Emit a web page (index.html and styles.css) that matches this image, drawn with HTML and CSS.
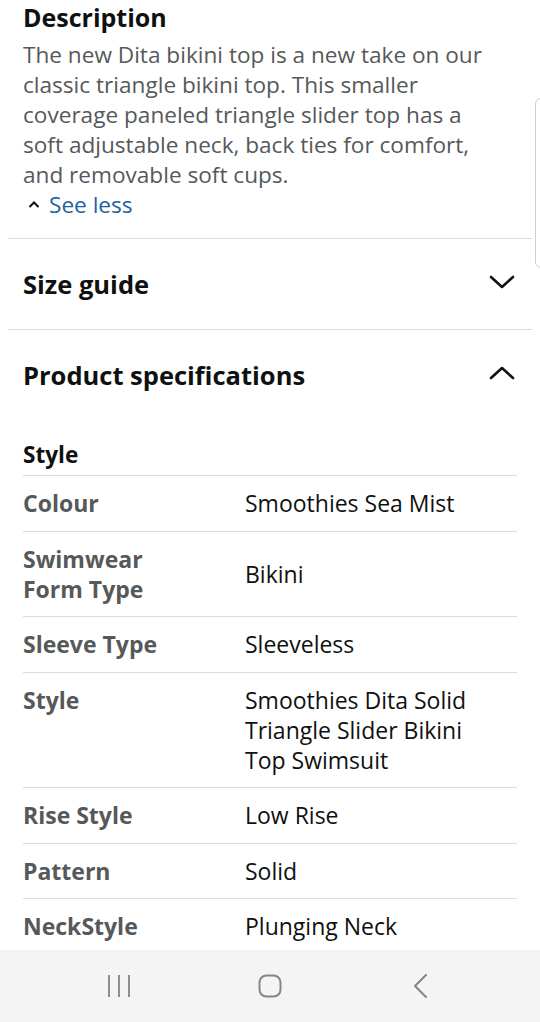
FILE: index.html
```html
<!DOCTYPE html>
<html lang="en">
<head>
<meta charset="utf-8">
<title>Product details</title>
<link rel="stylesheet" href="styles.css">
</head>
<body>
<main class="page">
  <section class="desc">
    <h2 class="desc-title">Description</h2>
    <p class="desc-text">The new Dita bikini top is a new take on our classic triangle bikini top. This smaller coverage paneled triangle slider top has a soft adjustable neck, back ties for comfort, and removable soft cups.</p>
    <a class="see-less" href="#">
      <svg class="caret" viewBox="0 0 12 8" width="12" height="8"><path d="M1.5 7 L6 2.5 L10.5 7" fill="none" stroke="#0f1111" stroke-width="2"/></svg>
      <span>See less</span>
    </a>
  </section>

  <section class="acc">
    <div class="acc-head">
      <h2 class="acc-title">Size guide</h2>
      <svg class="chev" viewBox="0 0 26 16" width="26" height="16"><path d="M2 3 L13 13 L24 3" fill="none" stroke="#0f1111" stroke-width="2.6" stroke-linecap="round" stroke-linejoin="round"/></svg>
    </div>
  </section>

  <section class="acc specs">
    <div class="acc-head">
      <h2 class="acc-title">Product specifications</h2>
      <svg class="chev" viewBox="0 0 26 16" width="26" height="16"><path d="M2 13 L13 3 L24 13" fill="none" stroke="#0f1111" stroke-width="2.6" stroke-linecap="round" stroke-linejoin="round"/></svg>
    </div>
    <h3 class="group">Style</h3>
    <div class="spec-table">
      <div class="row"><div class="k">Colour</div><div class="v">Smoothies Sea Mist</div></div>
      <div class="row"><div class="k">Swimwear Form Type</div><div class="v mid">Bikini</div></div>
      <div class="row"><div class="k">Sleeve Type</div><div class="v">Sleeveless</div></div>
      <div class="row"><div class="k">Style</div><div class="v">Smoothies Dita Solid Triangle Slider Bikini Top Swimsuit</div></div>
      <div class="row"><div class="k">Rise Style</div><div class="v">Low Rise</div></div>
      <div class="row"><div class="k">Pattern</div><div class="v">Solid</div></div>
      <div class="row"><div class="k">NeckStyle</div><div class="v">Plunging Neck</div></div>
    </div>
  </section>

  <div class="scroll-thumb"></div>
</main>

<nav class="navbar">
  <svg class="nav-ic" viewBox="0 0 24 24" width="24" height="24"><path d="M2 1 V23 M12 1 V23 M22 1 V23" stroke="#858585" stroke-width="1.8" fill="none"/></svg>
  <svg class="nav-ic" viewBox="0 0 24 24" width="24" height="24"><rect x="1.5" y="1.5" width="21" height="21" rx="7" ry="7" stroke="#858585" stroke-width="2" fill="none"/></svg>
  <svg class="nav-ic" viewBox="0 0 24 24" width="24" height="24"><path d="M17 1 L6 12 L17 23" stroke="#858585" stroke-width="2" fill="none" stroke-linecap="round" stroke-linejoin="round"/></svg>
</nav>
</body>
</html>
```

FILE: styles.css
```css
* { box-sizing: border-box; }
html, body { margin: 0; padding: 0; }
body {
  width: 540px;
  height: 1022px;
  overflow: hidden;
  background: #ffffff;
  font-family: "Open Sans", "Noto Sans", sans-serif;
  color: #0f1111;
  display: flex;
  flex-direction: column;
}
.page {
  flex: 1;
  position: relative;
  overflow: hidden;
}
.desc {
  margin: 0 8px;
  padding: 2px 15px 18px;
}
.desc-title {
  margin: 0;
  font-size: 25px;
  line-height: 30px;
  font-weight: 700;
  color: #0f1111;
}
.desc-text {
  margin: 8px 0 0;
  width: 477px;
  font-size: 22.6px;
  line-height: 30px;
  color: #565959;
}
.see-less {
  display: flex;
  align-items: center;
  gap: 9px;
  padding-left: 5px;
  font-size: 22.6px;
  line-height: 30px;
  color: #2162a1;
  text-decoration: none;
}
.caret { margin-top: -2px; }
.acc {
  margin: 0 8px;
  padding: 0 15px;
  border-top: 1px solid #dcdcdc;
}
.acc-head {
  height: 90px;
  display: flex;
  align-items: center;
  justify-content: space-between;
}
.acc-title {
  margin: 0;
  font-size: 25.5px;
  line-height: 30px;
  font-weight: 700;
  color: #0f1111;
}
.chev { margin-right: 2px; margin-top: -4px; }
.group {
  margin: 20px 0 0;
  padding-bottom: 5px;
  font-size: 22.6px;
  line-height: 30px;
  font-weight: 700;
  color: #0f1111;
  border-bottom: 1px solid #dcdcdc;
}
.row {
  display: flex;
  padding: 12px 0 12.5px;
  border-bottom: 1px solid #dcdcdc;
  font-size: 23px;
  line-height: 30px;
}
.k {
  width: 222px;
  flex: none;
  padding-right: 40px;
  font-weight: 700;
  color: #565959;
}
.v {
  flex: 1;
  padding-right: 20px;
  color: #0f1111;
}
.v.mid { align-self: center; }
.scroll-thumb {
  position: absolute;
  left: 535px;
  top: 98px;
  width: 12px;
  height: 170px;
  border: 1px solid #cfcfcf;
  border-radius: 6px;
  background: #ffffff;
}
.navbar {
  height: 72px;
  flex: none;
  background: #f4f4f4;
  display: flex;
  align-items: center;
  justify-content: center;
  gap: 127px;
}
.nav-ic { display: block; }
```
